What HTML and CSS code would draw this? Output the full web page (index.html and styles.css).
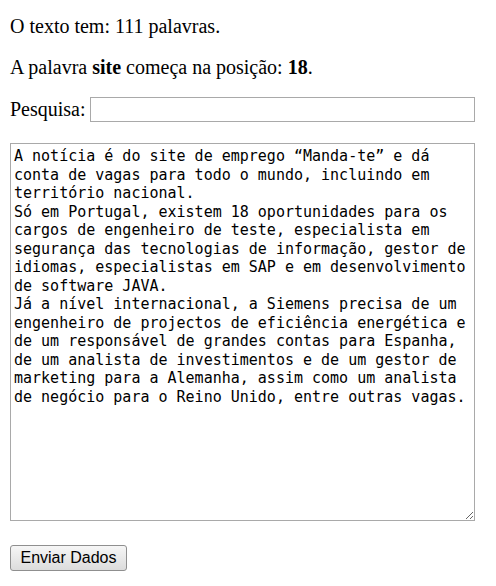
FILE: index.html
```html
<!DOCTYPE html>
<html lang="pt">
<head>
    <meta charset="UTF-8">
    <meta name="viewport" content="width=device-width, initial-scale=1.0">
    <title>Contagem de palavras</title>
    <link rel="stylesheet" href="styles.css">
</head>
<body>
    <p class="info">O texto tem: 111 palavras.</p>
    <p class="info">A palavra <b>site</b> começa na posição: <b>18</b>.</p>

    <form class="form">
        <div class="search-row">
            <label for="pesquisa">Pesquisa:</label>
            <input type="text" id="pesquisa" name="pesquisa">
        </div>
        <textarea id="texto" name="texto" class="texto">A notícia é do site de emprego “Manda-te” e dá conta de vagas para todo o mundo, incluindo em território nacional.
Só em Portugal, existem 18 oportunidades para os cargos de engenheiro de teste, especialista em segurança das tecnologias de informação, gestor de idiomas, especialistas em SAP e em desenvolvimento de software JAVA.
Já a nível internacional, a Siemens precisa de um engenheiro de projectos de eficiência energética e de um responsável de grandes contas para Espanha, de um analista de investimentos e de um gestor de marketing para a Alemanha, assim como um analista de negócio para o Reino Unido, entre outras vagas.</textarea>
        <button type="button" class="send">Enviar Dados</button>
    </form>
</body>
</html>
```

FILE: styles.css
```css
body {
    font-family: "Liberation Serif", "Times New Roman", serif;
    font-size: 20px;
    color: #000;
    background: #fff;
    margin: 0;
    padding: 15px 10px;
}
.info {
    margin: 0 0 18px;
    line-height: 23px;
}
.form {
    margin-top: 3px;
}
.search-row {
    display: flex;
    align-items: center;
    gap: 4px;
    margin-bottom: 21px;
}
.search-row label {
    line-height: 23px;
}
.search-row input {
    box-sizing: border-box;
    width: 385px;
    height: 25px;
    border: 1px solid #a9a9a9;
    padding: 1px 3px;
    font-size: 16px;
}
.texto {
    display: block;
    box-sizing: border-box;
    width: 465px;
    height: 378px;
    margin: 0;
    padding: 3px 3px 2px;
    border: 1px solid #a9a9a9;
    font-family: "DejaVu Sans Mono", "Liberation Mono", monospace;
    font-size: 15px;
    line-height: 18.5px;
    color: #000;
}
.send {
    display: block;
    box-sizing: border-box;
    width: 117px;
    height: 26px;
    margin-top: 24px;
    padding: 0 8px;
    border: 1px solid #8f8f8f;
    border-radius: 3px;
    background: linear-gradient(#f6f6f6, #dcdcdc);
    font-family: "Liberation Sans", Arial, sans-serif;
    font-size: 16px;
    color: #000;
}
```
